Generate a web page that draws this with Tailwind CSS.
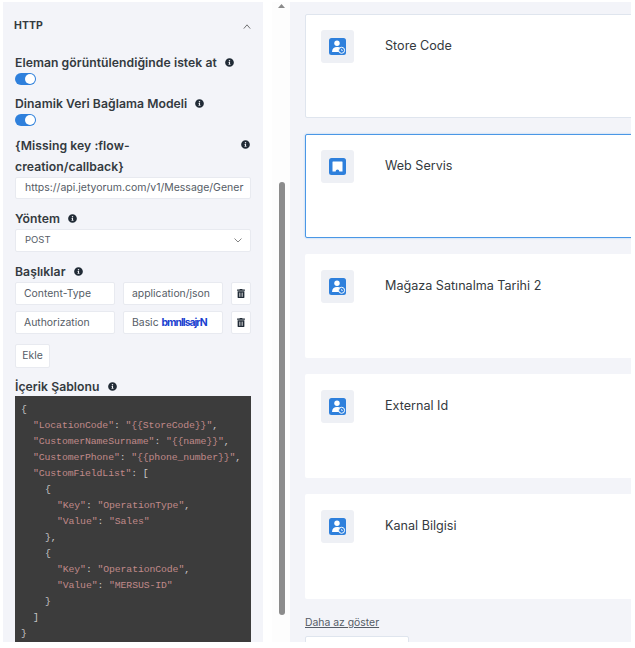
<!DOCTYPE html>
<html lang="en">
<head>
  <meta charset="UTF-8" />
  <title>HTTP</title>
  <script src="https://cdn.jsdelivr.net/npm/@tailwindcss/browser@4"></script>
</head>
<body class="bg-white font-['Inter',sans-serif] text-[#343a40] overflow-hidden">

  <!-- shared icons -->
  <svg class="hidden">
    <symbol id="info" viewBox="0 0 512 512"><path fill="#212b36" d="M256 8a248 248 0 1 0 0 496 248 248 0 0 0 0-496zm0 110a42 42 0 1 1 0 84 42 42 0 0 1 0-84zm56 254c0 7-5 12-12 12h-88c-7 0-12-5-12-12v-24c0-7 5-12 12-12h12v-64h-12c-7 0-12-5-12-12v-24c0-7 5-12 12-12h64c7 0 12 5 12 12v100h12c7 0 12 5 12 12z"/></symbol>
    <symbol id="trash" viewBox="0 0 448 512"><path fill="#212b36" d="M32 464a48 48 0 0 0 48 48h288a48 48 0 0 0 48-48V128H32zm272-256a16 16 0 0 1 32 0v224a16 16 0 0 1-32 0zm-96 0a16 16 0 0 1 32 0v224a16 16 0 0 1-32 0zm-96 0a16 16 0 0 1 32 0v224a16 16 0 0 1-32 0zM432 32H312l-9-19a24 24 0 0 0-22-13H167a24 24 0 0 0-21 13l-9 19H16A16 16 0 0 0 0 48v32a16 16 0 0 0 16 16h416a16 16 0 0 0 16-16V48a16 16 0 0 0-16-16z"/></symbol>
    <symbol id="user" viewBox="0 0 17 17">
      <rect width="17" height="17" rx="2.5" fill="#2f80dc"/>
      <circle cx="8" cy="5.2" r="2.7" fill="#fff"/>
      <path fill="#fff" d="M3 14c0-3.200 2-5 5-5 1.600 0 2.900.5 3.700 1.400V14z"/>
      <circle cx="12.600" cy="12.300" r="3" fill="#2f80dc" stroke="#fff" stroke-width="1"/>
      <path d="M12.600 11v1.500h1.200" fill="none" stroke="#fff" stroke-width=".7"/>
    </symbol>
    <symbol id="plug" viewBox="0 0 17 17">
      <rect width="17" height="17" rx="2.500" fill="#2f80dc"/>
      <path fill="#fff" d="M4 3.500h9a.5.5 0 0 1 .5.500v9.500h-3.200c0-1.200-.8-2-1.800-2s-1.800.8-1.800 2H3.500V4a.5.5 0 0 1 .5-.5z"/>
    </symbol>
  </svg>

  <div class="flex w-[635px] h-[648px] overflow-hidden">

    <!-- left settings panel -->
    <aside class="w-[260px] h-[640px] ml-[3px] mt-[2px] shrink-0 bg-[#f3f4f9] pl-3 pr-3 text-[12.2px] tracking-[0.05px] font-semibold overflow-hidden">
      <div class="flex justify-between items-center w-[236px] h-[14px] mt-4 text-[10.5px] font-bold">
        <span class="-ml-[1px] mt-[2px]">HTTP</span>
        <svg class="w-[8px] h-[5px] mt-[3px]" viewBox="0 0 10 6" preserveAspectRatio="none" fill="none" stroke="#555" stroke-width="1"><path d="M1 5.500l4-4.500 4 4.500"/></svg>
      </div>

      <div class="flex items-center gap-2 h-[16px] mt-[22px]">
        <span class="whitespace-nowrap mt-[2px]">Eleman görüntülendiğinde istek at</span>
        <svg class="w-[9px] h-[9px]"><use href="#info"/></svg>
      </div>
      <div class="w-[21px] h-[12px] mt-[3px] rounded-full bg-[#2f80dc] flex justify-end items-center pr-[1px]"><div class="w-[10px] h-[10px] rounded-full bg-white"></div></div>

      <div class="flex items-center gap-2 h-[16px] mt-[10px]">
        <span class="whitespace-nowrap mt-[2px]">Dinamik Veri Bağlama Modeli</span>
        <svg class="w-[9px] h-[9px]"><use href="#info"/></svg>
      </div>
      <div class="w-[21px] h-[12px] mt-[3px] rounded-full bg-[#2f80dc] flex justify-end items-center pr-[1px]"><div class="w-[10px] h-[10px] rounded-full bg-white"></div></div>

      <div class="flex justify-between items-start mt-[8px] w-[236px]">
        <span class="leading-[21px] pt-[1px]">{Missing key :flow-<br />creation/callback}</span>
        <svg class="w-[9px] h-[9px] mt-[6px] mr-[1px]"><use href="#info"/></svg>
      </div>

      <div class="w-[236px] h-[22px] px-[9px] bg-white rounded-[2px] border border-[#e8eaf0] flex items-center overflow-hidden text-[10.5px] tracking-normal font-normal text-[#555c66] whitespace-nowrap">
        <span>https://api.jetyorum.com/v1/Message/Gener</span>
      </div>

      <div class="flex items-center gap-2 h-[16px] mt-[11px]">
        <span class="mt-[2px]">Yöntem</span>
        <svg class="w-[9px] h-[9px]"><use href="#info"/></svg>
      </div>
      <div class="w-[236px] h-[23px] mt-[3px] pl-[9px] pr-[8px] bg-white rounded-[2px] border border-[#e8eaf0] flex justify-between items-center text-[9.500px] tracking-normal font-normal text-[#555c66]">
        <span>POST</span>
        <svg class="w-[8px] h-[5px]" viewBox="0 0 8 5" fill="none" stroke="#777" stroke-width=".9"><path d="M.5.500l3.500 3.500 3.500-3.500"/></svg>
      </div>

      <div class="flex items-center gap-2 h-[16px] mt-[11px]">
        <span class="mt-[2px]">Başlıklar</span>
        <svg class="w-[9px] h-[9px]"><use href="#info"/></svg>
      </div>
      <div class="flex flex-col gap-[6px] mt-[3px] text-[10.4px] tracking-normal font-normal text-[#555c66]">
        <div class="flex w-[236px] h-[23px]">
          <div class="w-[100px] bg-white rounded-[2px] border border-[#e8eaf0] flex items-center px-[8px]">Content-Type</div>
          <div class="w-[100px] ml-2 bg-white rounded-[2px] border border-[#e8eaf0] flex items-center px-[8px] whitespace-nowrap">application/json</div>
          <div class="w-[20px] ml-2 bg-white rounded-[2px] border border-[#e8eaf0] flex items-center justify-center"><svg class="w-[8px] h-[9px]"><use href="#trash"/></svg></div>
        </div>
        <div class="flex w-[236px] h-[23px]">
          <div class="w-[100px] bg-white rounded-[2px] border border-[#e8eaf0] flex items-center px-[8px]">Authorization</div>
          <div class="w-[100px] ml-2 bg-white rounded-[2px] border border-[#e8eaf0] flex items-center px-[8px] whitespace-nowrap overflow-hidden">Basic&nbsp;<span class="text-[#1b3fd0] font-bold tracking-[-1px]">bmnllsajrN</span></div>
          <div class="w-[20px] ml-2 bg-white rounded-[2px] border border-[#e8eaf0] flex items-center justify-center"><svg class="w-[8px] h-[9px]"><use href="#trash"/></svg></div>
        </div>
      </div>

      <div class="w-[35px] h-[24px] mt-[10px] bg-white rounded-[2px] border border-[#e8eaf0] flex items-center justify-center text-[10.4px] tracking-normal font-normal text-[#555c66]">Ekle</div>

      <div class="flex items-center gap-2 h-[16px] mt-[10px]">
        <span class="mt-[2px]">İçerik Şablonu</span>
        <svg class="w-[9px] h-[9px]"><use href="#info"/></svg>
      </div>

      <div class="w-[236px] h-[260px] mt-[2px] pl-[6px] pt-[6px] bg-[#3c3c3c] font-['Liberation_Mono',monospace] text-[9.800px] tracking-[-0.1px] leading-[16px] font-normal text-[#c8c8c8] overflow-hidden whitespace-nowrap">
        <div>{</div>
        <div class="pl-[12px]"><span class="text-[#c08a8a]">"LocationCode"</span>: <span class="text-[#c08a8a]">"{{StoreCode}}"</span>,</div>
        <div class="pl-[12px]"><span class="text-[#c08a8a]">"CustomerNameSurname"</span>: <span class="text-[#c08a8a]">"{{name}}"</span>,</div>
        <div class="pl-[12px]"><span class="text-[#c08a8a]">"CustomerPhone"</span>: <span class="text-[#c08a8a]">"{{phone_number}}"</span>,</div>
        <div class="pl-[12px]"><span class="text-[#c08a8a]">"CustomFieldList"</span>: [</div>
        <div class="pl-[24px]">{</div>
        <div class="pl-[36px]"><span class="text-[#c08a8a]">"Key"</span>: <span class="text-[#c08a8a]">"OperationType"</span>,</div>
        <div class="pl-[36px]"><span class="text-[#c08a8a]">"Value"</span>: <span class="text-[#c08a8a]">"Sales"</span></div>
        <div class="pl-[24px]">},</div>
        <div class="pl-[24px]">{</div>
        <div class="pl-[36px]"><span class="text-[#c08a8a]">"Key"</span>: <span class="text-[#c08a8a]">"OperationCode"</span>,</div>
        <div class="pl-[36px]"><span class="text-[#c08a8a]">"Value"</span>: <span class="text-[#c08a8a]">"MERSUS-ID"</span></div>
        <div class="pl-[24px]">}</div>
        <div class="pl-[12px]">]</div>
        <div>}</div>
      </div>
    </aside>

    <!-- scrollbar -->
    <div class="w-[18px] h-[640px] ml-[9px] mt-[2px] shrink-0 bg-[#fdfdfd] flex flex-col items-center pl-[1px]">
      <svg class="w-[7px] h-[4px] mt-[2px]" viewBox="0 0 7 4"><path fill="#8a8a8a" d="M3.500 0l3.500 4H0z"/></svg>
      <div class="w-[6px] h-[433px] mt-[174px] rounded-full bg-[#8c8c8c]"></div>
    </div>

    <!-- right card list -->
    <main class="w-[341px] h-[640px] mt-[2px] shrink-0 bg-[#f3f4f9] pl-[15px] pt-3 overflow-hidden">
      <div class="flex flex-col gap-4 w-[360px] text-[12.6px]">
        <div class="h-[104px] bg-white border border-[#dfe5ee] rounded-[2px] flex items-start pl-[15px] pt-[15px]">
          <div class="w-[33px] h-[33px] bg-[#eef0f5] rounded-[3px] flex items-center justify-center"><svg class="w-[17px] h-[17px]"><use href="#user"/></svg></div>
          <span class="ml-[31px] mt-[8px] leading-[16px]">Store Code</span>
        </div>
        <div class="h-[104px] bg-white border border-[#4a97e6] rounded-[2px] shadow-[0_0_2px_#9cc6f0] flex items-start pl-[15px] pt-[15px]">
          <div class="w-[33px] h-[33px] bg-[#eef0f5] rounded-[3px] flex items-center justify-center"><svg class="w-[17px] h-[17px]"><use href="#plug"/></svg></div>
          <span class="ml-[31px] mt-[8px] leading-[16px]">Web Servis</span>
        </div>
        <div class="h-[104px] bg-white rounded-[2px] flex items-start pl-4 pt-4">
          <div class="w-[33px] h-[33px] bg-[#eef0f5] rounded-[3px] flex items-center justify-center"><svg class="w-[17px] h-[17px]"><use href="#user"/></svg></div>
          <span class="ml-[31px] mt-[8px] leading-[16px]">Mağaza Satınalma Tarihi 2</span>
        </div>
        <div class="h-[104px] bg-white rounded-[2px] flex items-start pl-4 pt-4">
          <div class="w-[33px] h-[33px] bg-[#eef0f5] rounded-[3px] flex items-center justify-center"><svg class="w-[17px] h-[17px]"><use href="#user"/></svg></div>
          <span class="ml-[31px] mt-[8px] leading-[16px]">External Id</span>
        </div>
        <div class="h-[105px] bg-white rounded-[2px] flex items-start pl-4 pt-4">
          <div class="w-[33px] h-[33px] bg-[#eef0f5] rounded-[3px] flex items-center justify-center"><svg class="w-[17px] h-[17px]"><use href="#user"/></svg></div>
          <span class="ml-[31px] mt-[8px] leading-[16px]">Kanal Bilgisi</span>
        </div>
      </div>
      <div class="mt-[17px] text-[10.4px] leading-[14px] underline text-[#555c66]">Daha az göster</div>
      <div class="w-[104px] h-[20px] mt-[6px] bg-white border border-[#dfe5ee] rounded-[2px]"></div>
    </main>
  </div>
</body>
</html>
